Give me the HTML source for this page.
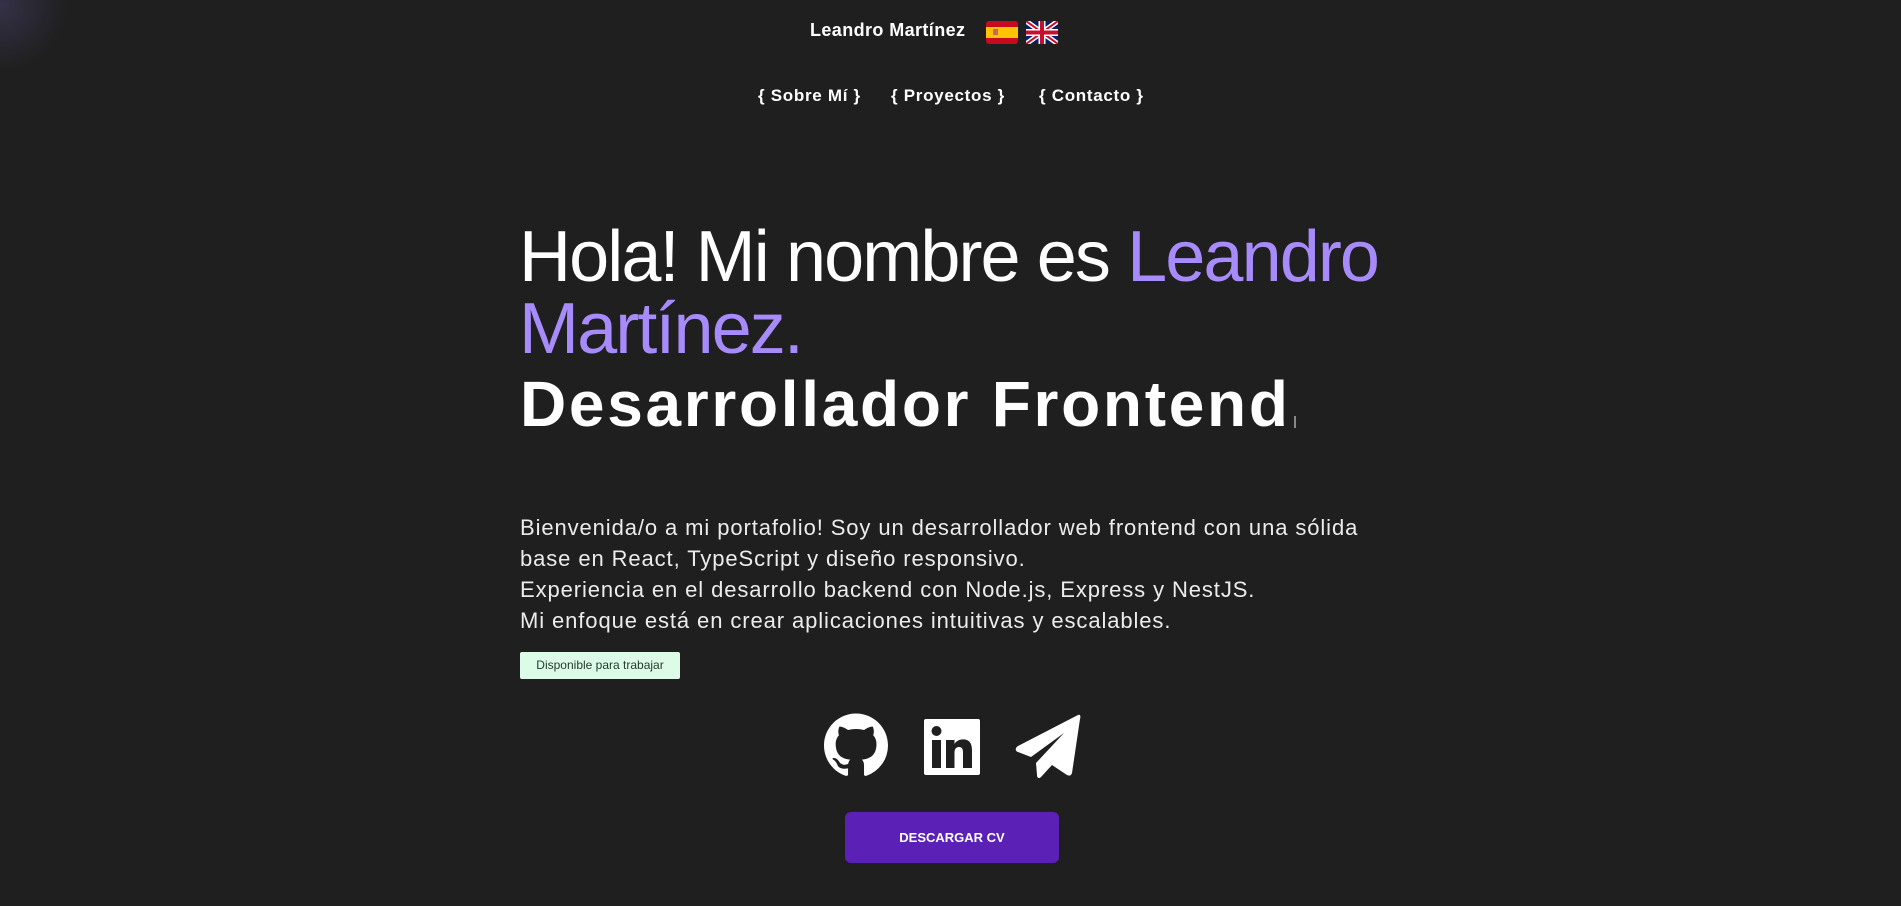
<!DOCTYPE html>
<html><head><meta charset="utf-8"><style>
html,body{margin:0;padding:0;width:1901px;height:906px;overflow:hidden;background:#1f1f1f;font-family:"Liberation Sans",sans-serif;color:#fff}
.glow{position:absolute;left:-70px;top:-60px;width:140px;height:130px;border-radius:50%;background:radial-gradient(circle,rgba(80,72,120,.45),rgba(31,31,31,0) 70%)}
.abs{position:absolute;white-space:nowrap}
.name{left:810px;top:20px;font-size:18px;font-weight:bold;letter-spacing:0.4px}
.nav{top:86px;font-size:17px;font-weight:bold;letter-spacing:0.7px}
h1{position:absolute;left:519px;top:221px;margin:0;font-weight:normal;font-size:72px;line-height:72px;letter-spacing:-1.9px;width:900px}
.p{color:#a78bfa}
.role{left:520px;top:372px;font-size:64px;font-weight:bold;letter-spacing:2.7px;line-height:64px}
.cursor{position:absolute;left:1294px;top:416px;width:2px;height:12px;background:#888}
.desc{position:absolute;left:520px;top:512px;font-size:22px;line-height:31px;color:#ececec;letter-spacing:0.9px;width:950px}
.badge{left:520px;top:652px;width:160px;height:27px;background:#dcfce7;color:#1f3a2a;font-size:12px;line-height:27px;text-align:center;border-radius:2px}
.btn{left:845px;top:812px;width:214px;height:51px;background:#5b21b6;border-radius:6px;font-size:13px;font-weight:bold;line-height:51px;text-align:center}
</style></head><body>
<div class="glow"></div>
<div class="abs name">Leandro Martínez</div>
<svg class="abs" style="left:986px;top:21px" width="32" height="23" viewBox="0 0 32 23"><rect width="32" height="23" rx="3" fill="#c60b1e"/><rect y="6" width="32" height="11" fill="#ffc400"/><rect x="7" y="8" width="5" height="6" fill="#c66"/></svg>
<svg class="abs" style="left:1026px;top:21px" width="32" height="23" viewBox="0 0 32 23"><rect width="32" height="23" rx="3" fill="#012169"/><path d="M0 0L32 23M32 0L0 23" stroke="#fff" stroke-width="5"/><path d="M0 0L32 23M32 0L0 23" stroke="#c8102e" stroke-width="2"/><path d="M16 0V23M0 11.5H32" stroke="#fff" stroke-width="7"/><path d="M16 0V23M0 11.5H32" stroke="#c8102e" stroke-width="4"/></svg>
<div class="abs nav" style="left:758px">{ Sobre Mí }</div>
<div class="abs nav" style="left:891px">{ Proyectos }</div>
<div class="abs nav" style="left:1039px">{ Contacto }</div>
<h1>Hola! Mi nombre es <span class="p">Leandro Martínez.</span></h1>
<div class="abs role">Desarrollador Frontend</div>
<div class="cursor"></div>
<div class="desc">Bienvenida/o a mi portafolio! Soy un desarrollador web frontend con una sólida<br>base en React, TypeScript y diseño responsivo.<br>Experiencia en el desarrollo backend con Node.js, Express y NestJS.<br>Mi enfoque está en crear aplicaciones intuitivas y escalables.</div>
<div class="abs badge">Disponible para trabajar</div>
<svg class="abs" style="left:824px;top:713px" width="64" height="65" viewBox="0 0 16 16"><path fill="#fff" d="M8 0C3.58 0 0 3.58 0 8c0 3.54 2.29 6.53 5.47 7.59.4.07.55-.17.55-.38 0-.19-.01-.82-.01-1.49-2.01.37-2.53-.49-2.690-.94-.09-.23-.48-.94-.82-1.13-.28-.15-.68-.52-.01-.53.63-.01 1.08.58 1.23.82.72 1.21 1.87.87 2.33.66.07-.52.28-.87.51-1.07-1.78-.2-3.64-.89-3.64-3.95 0-.87.31-1.59.82-2.15-.08-.2-.36-1.02.08-2.12 0 0 .67-.21 2.2.82.64-.18 1.32-.27 2-.27.68 0 1.36.09 2 .27 1.53-1.04 2.2-.82 2.2-.82.44 1.1.16 1.92.08 2.12.51.56.82 1.27.82 2.15 0 3.07-1.87 3.75-3.65 3.95.29.25.54.73.54 1.48 0 1.07-.01 1.93-.01 2.2 0 .21.15.46.55.38A8.013 8.013 0 0 0 16 8c0-4.42-3.58-8-8-8z"/></svg>
<svg class="abs" style="left:924px;top:719px" width="56" height="56" viewBox="0 0 56 56"><rect width="56" height="56" rx="2" fill="#fff"/><rect x="8" y="21" width="9" height="28" fill="#1f1f1f"/><circle cx="12.5" cy="12" r="5" fill="#1f1f1f"/><path d="M22 21h8.5v4c1.5-2.6 4.5-4.6 8.5-4.6 6.5 0 9 4 9 11V49h-9V33.5c0-3.5-1-5.5-4-5.5s-4.5 2.2-4.5 5.5V49H22z" fill="#1f1f1f"/></svg>
<svg class="abs" style="left:1014px;top:713px" width="67" height="67" viewBox="0 0 67 67"><path fill="#fff" d="M64 2C66 1 67 3 66 6L58 60C57 63 55 63 53 62L38 52L27 64C25 66 23 65 23 62L22 50L50 20L17 44L4 39C1 38 1 35 4 33Z"/></svg>
<div class="abs btn">DESCARGAR CV</div>
</body></html>
